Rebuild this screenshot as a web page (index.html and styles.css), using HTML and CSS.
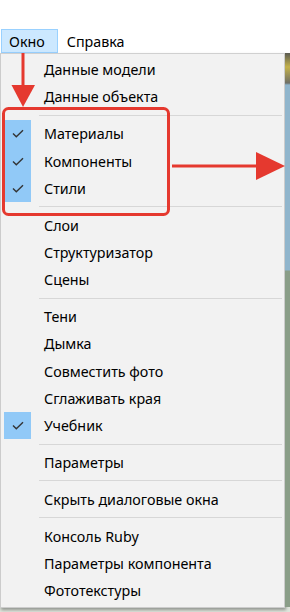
FILE: index.html
```html
<!DOCTYPE html>
<html lang="ru">
<head>
  <meta charset="UTF-8">
  <title>Меню Окно</title>
  <link rel="stylesheet" href="styles.css">
</head>
<body>
  <div class="page">
    <div class="menubar">
      <span class="top-item active">Окно</span>
      <span class="top-item">Справка</span>
    </div>
    <div class="work">
      <div class="menu">
        <div class="item"><span class="mark"></span>Данные модели</div>
        <div class="item"><span class="mark"></span>Данные объекта</div>
        <div class="sep"></div>
        <div class="item"><span class="mark on"><svg viewBox="0 0 12 9"><path d="M1 4.5 L4.3 7.8 L11 1.2"/></svg></span>Материалы</div>
        <div class="item"><span class="mark on"><svg viewBox="0 0 12 9"><path d="M1 4.5 L4.3 7.8 L11 1.2"/></svg></span>Компоненты</div>
        <div class="item"><span class="mark on"><svg viewBox="0 0 12 9"><path d="M1 4.5 L4.3 7.8 L11 1.2"/></svg></span>Стили</div>
        <div class="sep"></div>
        <div class="item"><span class="mark"></span>Слои</div>
        <div class="item"><span class="mark"></span>Структуризатор</div>
        <div class="item"><span class="mark"></span>Сцены</div>
        <div class="sep"></div>
        <div class="item"><span class="mark"></span>Тени</div>
        <div class="item"><span class="mark"></span>Дымка</div>
        <div class="item"><span class="mark"></span>Совместить фото</div>
        <div class="item"><span class="mark"></span>Сглаживать края</div>
        <div class="item"><span class="mark on"><svg viewBox="0 0 12 9"><path d="M1 4.5 L4.3 7.8 L11 1.2"/></svg></span>Учебник</div>
        <div class="sep"></div>
        <div class="item"><span class="mark"></span>Параметры</div>
        <div class="sep"></div>
        <div class="item"><span class="mark"></span>Скрыть диалоговые окна</div>
        <div class="sep"></div>
        <div class="item"><span class="mark"></span>Консоль Ruby</div>
        <div class="item"><span class="mark"></span>Параметры компонента</div>
        <div class="item"><span class="mark"></span>Фототекстуры</div>
      </div>
      <div class="strip"></div>
    </div>

    <!-- красные пометки поверх скриншота -->
    <svg class="marks" viewBox="0 0 290 612">
      <line x1="23" y1="53" x2="23" y2="90"/>
      <polygon points="11.5,85 35,85 23,107"/>
      <rect x="3.5" y="108.5" width="165" height="106" rx="5"/>
      <line x1="172" y1="166" x2="260" y2="166"/>
      <polygon points="256,152 256,180 285,166"/>
    </svg>
  </div>
</body>
</html>
```

FILE: styles.css
```css
body {
  margin: 0;
  background: #fff;
  font-family: 'Noto Sans', 'Open Sans', sans-serif;
  font-size: 14.3px;
  color: #000;
}
.page {
  position: relative;
  width: 290px;
  height: 612px;
  overflow: hidden;
  background: #dfe5dc;
}
.menubar {
  height: 24px;
  padding-top: 29px;
  background: #fff;
  display: flex;
  align-items: stretch;
}
.top-item {
  display: flex;
  align-items: center;
  padding: 0 8px 0 8px;
  border: 1px solid transparent;
}
.top-item.active {
  margin-left: 1px;
  padding: 0 12px 0 7px;
  background: #cce8ff;
  border-color: #99d1ff;
}
.work {
  display: flex;
  height: 554px;
}
.menu {
  width: 283px;
  height: 551px;
  border: 1px solid #cccccc;
  border-top-color: #d0d0d0;
  background: #f2f2f2;
  padding: 2px 0 0 0;
  box-shadow: 1px 2px 3px rgba(0, 0, 0, 0.35);
}
.item {
  height: 27.3px;
  display: flex;
  align-items: center;
  padding-left: 3px;
  white-space: nowrap;
}
.mark {
  width: 27px;
  height: 100%;
  margin-right: 13px;
  display: flex;
  align-items: center;
  justify-content: center;
}
.mark.on {
  background: #91c9f7;
}
.mark svg {
  width: 12px;
  height: 9px;
  fill: none;
  stroke: #333;
  stroke-width: 1.4;
}
.sep {
  height: 9.5px;
  display: flex;
  align-items: center;
  padding: 0 2px 0 38px;
}
.sep::before {
  content: '';
  flex: 1;
  height: 1px;
  background: #d7d7d7;
}
.strip {
  width: 5px;
  height: 554px;
  background: linear-gradient(#5a5a52 0, #c4b24a 14px, #6f6f66 30px, #90b5cc 32px, #90b5cc 217px, #8a9e88 218px, #8a9e88 100%);
}
.marks {
  position: absolute;
  left: 0;
  top: 0;
  width: 290px;
  height: 612px;
}
.marks line,
.marks rect {
  fill: none;
  stroke: #e5392f;
  stroke-width: 3;
}
.marks polygon {
  fill: #e5392f;
}
```
